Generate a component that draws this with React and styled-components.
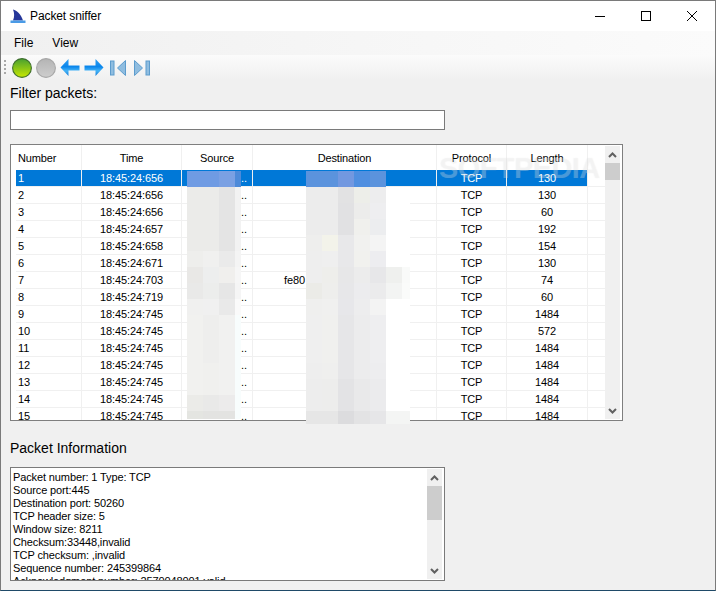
import React from 'react';
import styled, { createGlobalStyle } from 'styled-components';

const GlobalStyle = createGlobalStyle`
  html, body {
    margin: 0;
    padding: 0;
    background: #f0f0f0;
    overflow: hidden;
  }
`;

const Window = styled.div`
  width: 716px;
  height: 591px;
  box-sizing: border-box;
  display: flex;
  flex-direction: column;
  background: #f0f0f0;
  border: 1px solid #7a7a7a;
  border-bottom: 1px solid #1f4a68;
  font-family: 'Liberation Sans', Arial, sans-serif;
  color: #000;
  overflow: hidden;
`;

const TitleBar = styled.div`
  height: 30px;
  flex: none;
  display: flex;
  align-items: center;
  background: #fff;
  padding-left: 9px;
`;

const TitleText = styled.span`
  font-size: 12px;
  letter-spacing: -0.1px;
  margin-left: 4px;
  flex: 1;
`;

const CaptionButton = styled.div`
  width: 46px;
  height: 30px;
  display: flex;
  align-items: center;
  justify-content: center;
`;

const MenuBar = styled.div`
  height: 24px;
  flex: none;
  display: flex;
  align-items: center;
  gap: 19px;
  padding-left: 13px;
  font-size: 12px;
  background: linear-gradient(90deg, #f0f0f0 0%, #f6f6f6 50%, #fbfbfb 100%);
`;

const ToolBar = styled.div`
  height: 25px;
  flex: none;
  display: flex;
  align-items: center;
  padding-left: 3px;
  background: linear-gradient(180deg, #fbfbfb 0%, #f0f0f0 100%);
`;

const Grip = styled.div`
  width: 2px;
  height: 15px;
  margin-right: 6px;
  background: repeating-linear-gradient(180deg, #a8a8a8 0 2px, transparent 2px 4px);
`;

const ToolIcon = styled.svg`
  flex: none;
  display: block;
  margin-right: ${(p) => p.$gap}px;
  filter: ${(p) => (p.$soft ? 'blur(0.4px)' : 'none')};
`;

const Content = styled.div`
  flex: 1;
  display: flex;
  flex-direction: column;
  padding: 0 9px;
`;

const FieldLabel = styled.div`
  font-size: 14px;
  line-height: 16px;
  margin-top: ${(p) => p.$top}px;
`;

const FilterInput = styled.div`
  width: 435px;
  height: 20px;
  box-sizing: border-box;
  margin-top: 9px;
  background: #fff;
  border: 1px solid #7a7a7a;
`;

const TableWrap = styled.div`
  position: relative;
  margin-top: 14px;
  width: 613px;
  height: 277px;
`;

const TableFrame = styled.div`
  width: 100%;
  height: 100%;
  box-sizing: border-box;
  display: flex;
  background: #fff;
  border: 1px solid #7f7f7f;
  overflow: hidden;
`;

const TableBody = styled.div`
  width: 594px;
  flex: none;
  overflow: hidden;
`;

const Row = styled.div`
  display: grid;
  grid-template-columns: 66px 100px 71px 184px 70px 81px 18px;
  margin-left: 5px;
  height: ${(p) => (p.$header ? 25 : 17)}px;
  box-sizing: border-box;
  font-size: 11px;
  letter-spacing: -0.12px;
  color: ${(p) => (p.$selected ? '#fff' : '#000')};
`;

const Cell = styled.div`
  box-sizing: border-box;
  display: flex;
  align-items: center;
  justify-content: ${(p) => p.$align || 'center'};
  padding-left: ${(p) => p.$pad || 0}px;
  white-space: nowrap;
  overflow: hidden;
  background: ${(p) => (p.$selected ? '#0078d7' : '#fff')};
  border-right: 1px solid #f0f0f0;
  border-bottom: ${(p) => (p.$header ? 'none' : '1px solid #f0f0f0')};
  &:last-child {
    border-right: none;
    background: #fff;
  }
`;

const ScrollBar = styled.div`
  width: 15px;
  flex: none;
  margin: ${(p) => p.$margin};
  display: flex;
  flex-direction: column;
  background: #f0f0f0;
`;

const ScrollArrow = styled.div`
  height: 17px;
  flex: none;
  display: flex;
  align-items: center;
  justify-content: center;
`;

const ScrollTrack = styled.div`
  flex: 1;
`;

const ScrollThumb = styled.div`
  height: ${(p) => p.$height}px;
  background: #cdcdcd;
`;

const Mosaic = styled.svg`
  position: absolute;
  top: 27px;
  left: ${(p) => p.$left}px;
  display: block;
`;

const Watermark = styled.div`
  position: absolute;
  left: 429px;
  top: 8px;
  font-size: 29px;
  font-weight: bold;
  line-height: 32px;
  letter-spacing: -0.6px;
  color: rgba(255, 255, 255, 0.25);
  text-shadow: 0 0 1px rgba(120, 120, 120, 0.12);
  white-space: nowrap;
  pointer-events: none;
`;

const InfoBox = styled.div`
  margin-top: 11px;
  width: 435px;
  height: 114px;
  box-sizing: border-box;
  display: flex;
  background: #fff;
  border: 1px solid #7a7a7a;
  overflow: hidden;
`;

const InfoText = styled.div`
  flex: 1;
  padding: 3px 0 0 2px;
  font-size: 11px;
  letter-spacing: -0.12px;
  line-height: 13px;
  overflow: hidden;
`;

const InfoLine = styled.div`
  white-space: nowrap;
`;

const rows = [
  [1, '656', 130], [2, '656', 130], [3, '656', 60], [4, '657', 192], [5, '658', 154],
  [6, '671', 130], [7, '703', 74], [8, '719', 60], [9, '745', 1484], [10, '745', 572],
  [11, '745', 1484], [12, '745', 1484], [13, '745', 1484], [14, '745', 1484], [15, '745', 1484],
];

const infoLines = [
  'Packet number: 1 Type: TCP',
  'Source port:445',
  'Destination port: 50260',
  'TCP header size: 5',
  'Window size: 8211',
  'Checksum:33448,invalid',
  'TCP checksum: ,invalid',
  'Sequence number: 245399864',
  'Acknowledgment number: 2570048001,valid',
];

const sourceTiles = [
  ['#6f9be3', '#6f9be3', '#7aa0e3', '#4d8ad9'],
  ['#ebebe9', '#ebebe9', '#e4e4e4', '#f2f2f2'],
  ['#ebebe9', '#ebebe9', '#e4e4e4', '#f2f2f2'],
  ['#ebebe9', '#ebebe9', '#e4e4e4', '#f2f2f2'],
  ['#ebebe9', '#ebebe9', '#e4e4e4', '#f2f2f2'],
  ['#eeeeec', '#f0f0ef', '#eaeaea', '#f4f4f4'],
  ['#e9e8e6', '#edeeee', '#f0efed', '#f6f6f6'],
  ['#e9e9e8', '#ecedec', '#e6e6e6', '#f5f5f5'],
  ['#f0f0ef', '#f0f0f0', '#e9e9e9', '#fafafa'],
  ['#f1f1ef', '#eeeeed', '#f1f1f0', '#f8fdfd'],
  ['#f1f1ef', '#eeeeed', '#f1f1f0', '#f8fdfd'],
  ['#f1f1ef', '#eeeeed', '#f1f1f0', '#f8fdfd'],
  ['#f1f1ef', '#f0f0ee', '#f1f1f0', '#f8fdfd'],
  ['#f1f1ef', '#f0f0ee', '#f1f1f0', '#f8fdfd'],
  ['#ebebe8', '#e9e9e8', '#ecebeb', '#f8fdfd'],
  ['#e4e5e1', '#e3e3e1', '#e3e3e1', '#f8fdfd'],
];

const destTiles = [
  ['#5b93dd', '#5b93dd', '#7298e0', '#4f8fe0', '#5b93dd', null, null],
  ['#ececec', '#ececec', '#e2e2e3', '#edeee9', '#ededee', '#fff', '#fff'],
  ['#ececec', '#ececec', '#e1e1e3', '#ececeb', '#eeeef0', '#fff', '#fff'],
  ['#ececec', '#ececec', '#e1e1e3', '#f0f0ed', '#ecedef', '#fff', '#fff'],
  ['#eeeeed', '#f3f3ea', '#e8e8ea', '#f1f1ef', '#f4f4f4', '#fff', '#fff'],
  ['#eeeeee', '#efefef', '#e8e8ea', '#f1f1ee', '#ededf0', '#fff', '#fff'],
  ['#eeeeee', '#eeeeeb', '#e7e7e8', '#ececec', '#e7e7e9', '#eff0ee', '#f9faf9'],
  ['#ebebe7', '#eeeeec', '#e7e7e9', '#ececee', '#ebebec', '#f3f4f3', '#fafbfa'],
  ['#efefee', '#f0f0ef', '#e7e7ea', '#ededee', '#f3f3f3', '#fff', '#fff'],
  ['#efefef', '#f0f0ee', '#e6e6e8', '#ececed', '#eeeef0', '#fff', '#fff'],
  ['#efefef', '#f0f0ee', '#e6e6e8', '#ececed', '#eeeef0', '#fff', '#fff'],
  ['#efefef', '#f0f0ee', '#e6e6e8', '#ececed', '#eeeef0', '#fff', '#fff'],
  ['#eeeeee', '#efefee', '#e6e6e8', '#ececed', '#ededef', '#fff', '#fff'],
  ['#ededed', '#ededec', '#e3e3e5', '#e9e9ea', '#ebebed', '#fff', '#fff'],
  ['#ededed', '#ededec', '#e3e3e5', '#e9e9ea', '#ebebed', '#fff', '#fff'],
  ['#e6e6e6', '#e6e6e6', '#dcdcde', '#e3e3e4', '#e6e6e8', '#f4f5f4', '#f4f5f4'],
];

function MosaicBlock({ tiles, left, width, height }) {
  return (
    <Mosaic $left={left} width={width} height={height} shapeRendering="crispEdges">
      {tiles.map((line, y) =>
        line.map((fill, x) =>
          fill ? <rect key={`${x}-${y}`} x={x * 16} y={y * 16} width="16" height="16" fill={fill} /> : null
        )
      )}
    </Mosaic>
  );
}

const Chevron = ({ up }) => (
  <svg width="9" height="6" viewBox="0 0 9 6">
    <path d={up ? 'M1 5 L4.5 1.5 L8 5' : 'M1 1 L4.5 4.5 L8 1'} fill="none" stroke="#606060" strokeWidth="2" />
  </svg>
);

const SharkIcon = () => (
  <svg width="16" height="15" viewBox="0 0 16 15">
    <path d="M3 0.5 C7 1.5 11 5 13 11.5 L3 11.5 C4.5 8 4.5 4 3 0.5 Z" fill="#26379a" />
    <rect x="0.5" y="11.5" width="15" height="2.5" fill="#4a9be6" />
  </svg>
);

const Ball = ({ id, from, to, rim, gap }) => (
  <ToolIcon $gap={gap} width="20" height="20" viewBox="0 0 20 20">
    <defs>
      <linearGradient id={id} x1="0" y1="0" x2="0" y2="1">
        <stop offset="0" stopColor={from} />
        <stop offset="1" stopColor={to} />
      </linearGradient>
    </defs>
    <circle cx="10" cy="10" r="9.4" fill={`url(#${id})`} stroke={rim} strokeWidth="1.1" />
  </ToolIcon>
);

const ARROW_LEFT = 'M8.5 1 L0.5 9.5 L8.5 18 L8.5 12.5 L19.5 12.5 L19.5 7.5 L8.5 7.5 Z';
const ARROW_RIGHT = 'M11.5 1 L19.5 9.5 L11.5 18 L11.5 12.5 L0.5 12.5 L0.5 7.5 L11.5 7.5 Z';

const Arrow = ({ id, d, gap }) => (
  <ToolIcon $soft $gap={gap} width="20" height="20" viewBox="0 0 20 20">
    <defs>
      <linearGradient id={id} x1="0" y1="0" x2="0" y2="1">
        <stop offset="0" stopColor="#2f9ff2" />
        <stop offset="0.45" stopColor="#0a86ec" />
        <stop offset="0.7" stopColor="#45b4f6" />
        <stop offset="1" stopColor="#0f78d8" />
      </linearGradient>
    </defs>
    <path d={d} fill={`url(#${id})`} />
  </ToolIcon>
);

const Skip = ({ flip, gap }) => (
  <ToolIcon $soft $gap={gap} width="16" height="16" viewBox="0 0 16 16">
    <g transform={flip ? 'matrix(-1 0 0 1 16 0)' : undefined} fill="#8fbde0" stroke="#5d9ccd" strokeWidth="1">
      <rect x="0.5" y="1" width="3.5" height="14" />
      <path d="M15.5 0.5 L15.5 15.5 L7.5 8 Z" />
    </g>
  </ToolIcon>
);

export default function App() {
  return (
    <>
      <GlobalStyle />
      <Window>
        <TitleBar>
          <SharkIcon />
          <TitleText>Packet sniffer</TitleText>
          <CaptionButton>
            <svg width="10" height="10" viewBox="0 0 10 10">
              <path d="M0 5.5 H10" stroke="#000" strokeWidth="1" />
            </svg>
          </CaptionButton>
          <CaptionButton>
            <svg width="10" height="10" viewBox="0 0 10 10">
              <rect x="0.5" y="0.5" width="9" height="9" fill="none" stroke="#000" strokeWidth="1" />
            </svg>
          </CaptionButton>
          <CaptionButton>
            <svg width="10" height="10" viewBox="0 0 10 10">
              <path d="M0 0 L10 10 M10 0 L0 10" stroke="#000" strokeWidth="1" />
            </svg>
          </CaptionButton>
        </TitleBar>
        <MenuBar>
          <span>File</span>
          <span>View</span>
        </MenuBar>
        <ToolBar>
          <Grip />
          <Ball id="ball-green" from="#48a030" to="#c8e800" rim="#3f6f2f" gap={4} />
          <Ball id="ball-gray" from="#b4b4b4" to="#cecece" rim="#a8a8a8" gap={4} />
          <Arrow id="arrow-l" d={ARROW_LEFT} gap={4} />
          <Arrow id="arrow-r" d={ARROW_RIGHT} gap={6} />
          <Skip gap={8} />
          <Skip flip gap={0} />
        </ToolBar>
        <Content>
          <FieldLabel $top={5}>Filter packets:</FieldLabel>
          <FilterInput />
          <TableWrap>
            <TableFrame>
              <TableBody>
                <Row $header>
                  <Cell $header $align="flex-start" $pad={2}>Number</Cell>
                  <Cell $header>Time</Cell>
                  <Cell $header>Source</Cell>
                  <Cell $header>Destination</Cell>
                  <Cell $header>Protocol</Cell>
                  <Cell $header>Length</Cell>
                  <Cell $header />
                </Row>
                {rows.map(([num, ms, len], i) => {
                  const sel = i === 0;
                  return (
                    <Row key={num} $selected={sel}>
                      <Cell $selected={sel} $align="flex-start" $pad={2}>{num}</Cell>
                      <Cell $selected={sel}>18:45:24:{ms}</Cell>
                      <Cell $selected={sel} $align="flex-start" $pad={59}>..</Cell>
                      <Cell $selected={sel} $align="flex-start" $pad={31}>{num === 7 ? 'fe80' : ''}</Cell>
                      <Cell $selected={sel}>TCP</Cell>
                      <Cell $selected={sel}>{len}</Cell>
                      <Cell />
                    </Row>
                  );
                })}
              </TableBody>
              <ScrollBar $margin="1px 0 1px 0">
                <ScrollArrow><Chevron up /></ScrollArrow>
                <ScrollTrack><ScrollThumb $height={17} /></ScrollTrack>
                <ScrollArrow><Chevron /></ScrollArrow>
              </ScrollBar>
            </TableFrame>
            <MosaicBlock tiles={sourceTiles} left={177} width={54} height={248} />
            <MosaicBlock tiles={destTiles} left={296} width={104} height={253} />
            <Watermark>SOFTPEDIA</Watermark>
          </TableWrap>
          <FieldLabel $top={19}>Packet Information</FieldLabel>
          <InfoBox>
            <InfoText>
              {infoLines.map((line) => (
                <InfoLine key={line}>{line}</InfoLine>
              ))}
            </InfoText>
            <ScrollBar $margin="1px 2px 1px 0">
              <ScrollArrow><Chevron up /></ScrollArrow>
              <ScrollTrack><ScrollThumb $height={34} /></ScrollTrack>
              <ScrollArrow><Chevron /></ScrollArrow>
            </ScrollBar>
          </InfoBox>
        </Content>
      </Window>
    </>
  );
}
